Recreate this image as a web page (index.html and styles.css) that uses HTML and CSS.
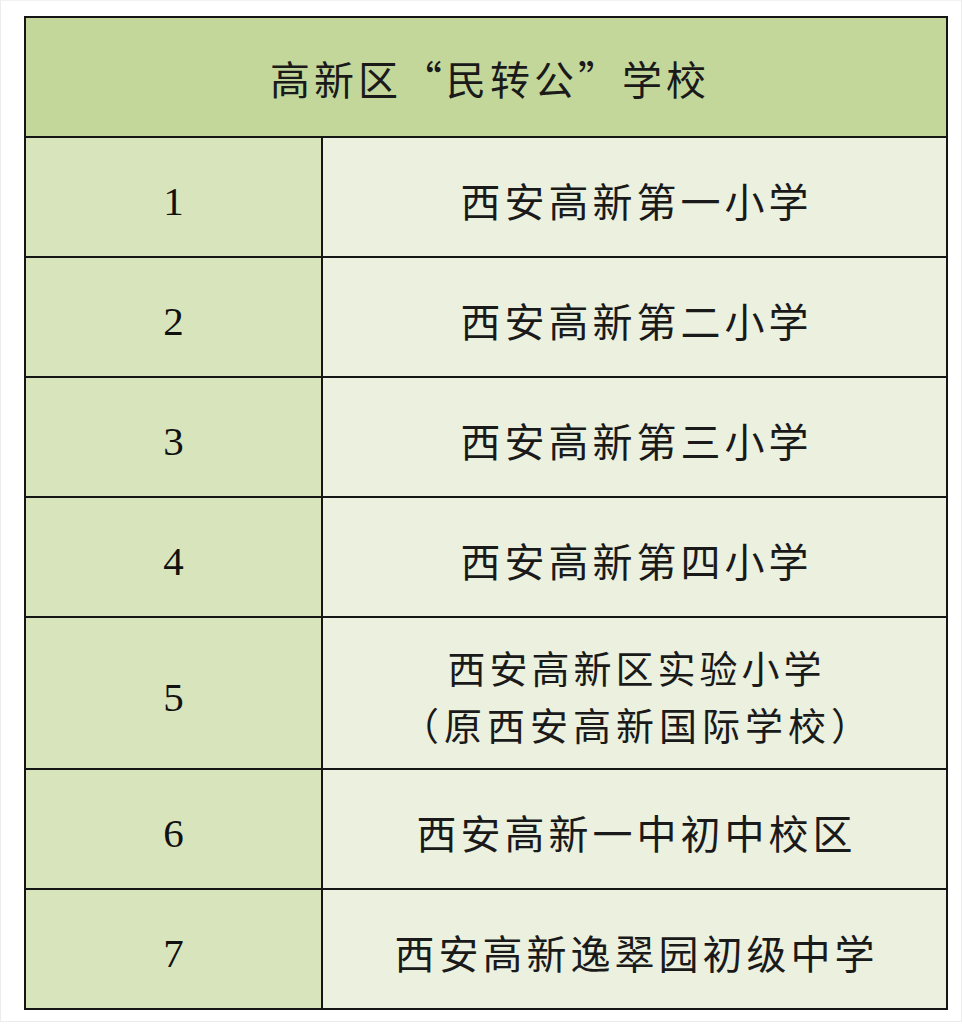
FILE: index.html
```html
<!DOCTYPE html>
<html lang="zh-CN">
<head>
<meta charset="utf-8">
<title>高新区“民转公”学校</title>
<link rel="stylesheet" href="styles.css">
</head>
<body>
<div class="frame">
  <div class="table">
    <div class="head">高新区“民转公”学校</div>
    <div class="row"><div class="num">1</div><div class="name">西安高新第一小学</div></div>
    <div class="row"><div class="num">2</div><div class="name">西安高新第二小学</div></div>
    <div class="row"><div class="num">3</div><div class="name">西安高新第三小学</div></div>
    <div class="row"><div class="num">4</div><div class="name">西安高新第四小学</div></div>
    <div class="row tall"><div class="num">5</div><div class="name small"><span>西安高新区实验小学</span><span class="wide">（原西安高新国际学校）</span></div></div>
    <div class="row"><div class="num">6</div><div class="name">西安高新一中初中校区</div></div>
    <div class="row last"><div class="num">7</div><div class="name">西安高新逸翠园初级中学</div></div>
  </div>
</div>
</body>
</html>
```

FILE: styles.css
```css
html, body {
  margin: 0;
  padding: 0;
  background: #ffffff;
}

.frame {
  box-sizing: border-box;
  width: 962px;
  height: 1022px;
  padding: 15px 0 0 23px;
  border: 1px solid #ececec;
  border-top-color: #f2f2f2;
}

.table {
  box-sizing: border-box;
  width: 924px;
  border: 2px solid #151515;
  font-family: "Noto Sans CJK SC", "Noto Sans", sans-serif;
  color: #1a1a1a;
}

.head {
  box-sizing: border-box;
  height: 120px;
  border-bottom: 2px solid #151515;
  background: #c4d79b;
  display: flex;
  align-items: center;
  justify-content: center;
  font-size: 40px;
  letter-spacing: 4px;
  padding-left: 8px;
  padding-top: 2px;
}

.row {
  box-sizing: border-box;
  height: 120px;
  display: grid;
  grid-template-columns: 297px 1fr;
  border-bottom: 2px solid #151515;
}

.row.tall {
  height: 152px;
}

.row.last {
  height: 118px;
  border-bottom: none;
}

.num {
  box-sizing: border-box;
  border-right: 2px solid #151515;
  background: #d8e4bc;
  display: flex;
  align-items: center;
  justify-content: center;
  font-family: "Liberation Serif", serif;
  font-size: 41px;
  padding-top: 8px;
  color: #111;
}

.name {
  background: #ebf1de;
  display: flex;
  flex-direction: column;
  align-items: center;
  justify-content: center;
  font-size: 40px;
  letter-spacing: 4px;
  padding-left: 4px;
  padding-top: 6px;
  line-height: 1.2;
}

.name.small {
  font-size: 38px;
  letter-spacing: 4px;
  line-height: 1.5;
  padding-top: 4px;
}

.name.small .wide {
  letter-spacing: 5px;
  padding-left: 2px;
}
```
